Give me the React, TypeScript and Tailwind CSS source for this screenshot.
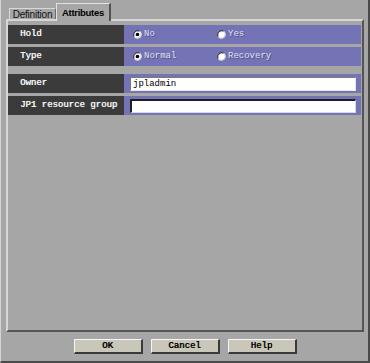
import React from "react";

const MONO = "font-['Liberation_Mono','DejaVu_Sans_Mono',monospace]";

const Radio: React.FC<{ checked?: boolean }> = ({ checked }) => (
    <svg width="9" height="9" viewBox="0 0 9 9" className="shrink-0">
        <circle cx="4.5" cy="4.5" r="4" fill="#ffffff" />
        <path d="M1.2 6.6 A4 4 0 0 1 6.6 1.2" fill="none" stroke="#3a3a3a" strokeWidth="1.2" />
        <path d="M7.8 2.4 A4 4 0 0 1 2.4 7.8" fill="none" stroke="#c8c8c8" strokeWidth="1" />
        {checked && <circle cx="4.5" cy="4.5" r="1.8" fill="#000000" />}
    </svg>
);

const RadioOption: React.FC<{ label: string; checked?: boolean }> = ({ label, checked }) => (
    <div className="flex w-[84px] items-center gap-[2px]">
        <Radio checked={checked} />
        <span className={`${MONO} text-[9px] leading-none text-[#e2e2f0] [text-shadow:1px_1px_0_#50508a]`}>{label}</span>
    </div>
);

const Row: React.FC<{ label: string; children: React.ReactNode; className?: string }> = ({ label, children, className }) => (
    <div className={`flex h-[19px] ${className ?? ""}`}>
        <div className={`${MONO} flex w-[116px] items-center bg-[#3b3b3b] pl-[12px] text-[9px] text-[#f4f4f4] [text-shadow:0.4px_0_0_#f4f4f4]`}>
            {label}
        </div>
        <div className="flex flex-1 items-center bg-[#7373b6]">{children}</div>
    </div>
);

const Button: React.FC<{ label: string }> = ({ label }) => (
    <button
        className={`${MONO} h-[15px] w-[69px] border-t border-l border-t-[#f4f4f0] border-l-[#f4f4f0] border-r-2 border-b-2 border-r-[#3a3a3a] border-b-[#3a3a3a] bg-[#c9c6ba] text-[9px] leading-none text-black [text-shadow:0.4px_0_0_#000]`}
    >
        {label}
    </button>
);

export default function App() {
    return (
        <div className="flex h-[363px] w-[370px] flex-col border-l border-l-[#d4d4d4] border-r-2 border-b-2 border-r-[#4a4a4a] border-b-[#4a4a4a] bg-[#a6a6a6]">
            {/* tabs */}
            <div className="flex h-[19px] items-end pl-[8px]">
                <div className="flex h-[11px] w-[47px] items-center justify-center border-t border-l border-r border-t-[#d8d8d8] border-l-[#d8d8d8] border-r-[#6a6a6a] font-['Liberation_Sans',Arial,sans-serif] text-[10px] tracking-[-0.2px] text-[#111]">
                    Definition
                </div>
                <div className="relative z-10 -mb-[2px] flex h-[18px] w-[55px] items-start justify-center border-t border-l border-r-2 border-t-[#e2e2e2] border-l-[#e2e2e2] border-r-[#505050] bg-[#a6a6a6] pt-[2px] font-['Liberation_Sans',Arial,sans-serif] text-[9.5px] font-bold tracking-[-0.3px] text-black">
                    Attributes
                </div>
            </div>

            {/* panel */}
            <div className="ml-[5px] mr-[4px] flex h-[313px] flex-col border-t-2 border-l-2 border-t-[#d6d6d6] border-l-[#d6d6d6] border-r-2 border-b-2 border-r-[#555555] border-b-[#555555] pt-[4px] pr-[1px]">
                <Row label="Hold">
                    <div className="flex pl-[9px]">
                        <RadioOption label="No" checked />
                        <RadioOption label="Yes" />
                    </div>
                </Row>
                <Row label="Type" className="mt-[3px]">
                    <div className="flex pl-[9px]">
                        <RadioOption label="Normal" checked />
                        <RadioOption label="Recovery" />
                    </div>
                </Row>
                <Row label="Owner" className="mt-[8px]">
                    <input
                        readOnly
                        value="jpladmin"
                        className={`${MONO} ml-[6px] mr-[5px] h-[14px] flex-1 border-t border-l border-t-[#7a7a7a] border-l-[#7a7a7a] border-b border-r border-b-[#e6e6e6] border-r-[#e6e6e6] bg-white pl-[2px] text-[9px] text-black outline-none`}
                    />
                </Row>
                <Row label="JP1 resource group" className="mt-[3px]">
                    <input
                        readOnly
                        value=""
                        className={`${MONO} ml-[6px] mr-[5px] h-[14px] flex-1 border-t-2 border-l-2 border-t-[#1e1e1e] border-l-[#1e1e1e] border-b border-r border-b-[#d8d8d8] border-r-[#d8d8d8] bg-white pl-[2px] text-[9px] text-black outline-none`}
                    />
                </Row>
            </div>

            {/* buttons */}
            <div className="mt-[7px] flex justify-center gap-[8px] pl-[1px]">
                <Button label="OK" />
                <Button label="Cancel" />
                <Button label="Help" />
            </div>
        </div>
    );
}
